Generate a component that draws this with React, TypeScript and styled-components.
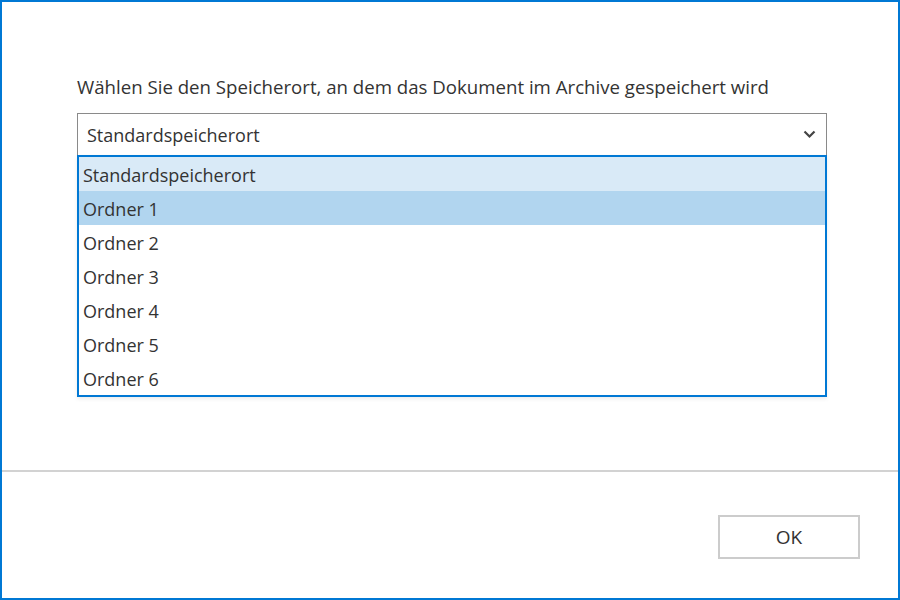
import styled, { createGlobalStyle } from 'styled-components';

const GlobalStyle = createGlobalStyle`
  html, body {
    margin: 0;
    padding: 0;
    background: #fff;
  }
  * {
    box-sizing: border-box;
  }
`;

const locations = [
  'Standardspeicherort',
  'Ordner 1',
  'Ordner 2',
  'Ordner 3',
  'Ordner 4',
  'Ordner 5',
  'Ordner 6',
];

const Chevron = () => (
  <svg width="13" height="9" viewBox="0 0 13 9" fill="none">
    <path d="M1.5 1.5 L6.5 6.5 L11.5 1.5" stroke="#444" strokeWidth="2.2" />
  </svg>
);

const App = () => {
  const selected = 'Standardspeicherort';
  const hovered = 'Ordner 1';

  return (
    <>
      <GlobalStyle />
      <Dialog>
        <Body>
          <Label>Wählen Sie den Speicherort, an dem das Dokument im Archive gespeichert wird</Label>
          <SelectWrap>
            <SelectBox>
              <span>{selected}</span>
              <Chevron />
            </SelectBox>
            <OptionList>
              {locations.map((loc) => (
                <Option
                  key={loc}
                  $selected={loc === selected}
                  $hovered={loc === hovered}
                >
                  {loc}
                </Option>
              ))}
            </OptionList>
          </SelectWrap>
        </Body>
        <Footer>
          <OkButton type="button">OK</OkButton>
        </Footer>
      </Dialog>
    </>
  );
};

export default App;

const Dialog = styled.div`
  width: 900px;
  height: 600px;
  border: 2px solid #0078d4;
  display: flex;
  flex-direction: column;
  font-family: 'Open Sans', 'Noto Sans', sans-serif;
  color: #333;
`;

const Body = styled.div`
  height: 470px;
  padding: 73px 71px 0 75px;
  border-bottom: 2px solid #d2d2d2;
`;

const Label = styled.div`
  font-size: 18.65px;
  line-height: 24px;
  margin-bottom: 14px;
`;

const SelectWrap = styled.div`
  position: relative;
  width: 750px;
`;

const SelectBox = styled.div`
  height: 43px;
  border: 1px solid #8a8a8a;
  display: flex;
  align-items: center;
  justify-content: space-between;
  padding: 0 10px 0 9px;
  font-size: 18px;
  background: #fff;
`;

const OptionList = styled.div`
  position: absolute;
  top: 42px;
  left: 0;
  right: 0;
  border: 2px solid #0078d4;
  background: #fff;
  box-shadow: 0 2px 4px rgba(0, 0, 0, 0.08);
`;

const Option = styled.div<{ $selected?: boolean; $hovered?: boolean }>`
  height: 34px;
  line-height: 36px;
  padding-left: 4px;
  font-size: 18px;
  background: ${(p) => (p.$hovered ? '#b1d5ef' : p.$selected ? '#d9eaf7' : '#fff')};
`;

const Footer = styled.div`
  flex: 1;
  display: flex;
  align-items: flex-start;
  justify-content: flex-end;
  padding: 43px 38px 0 0;
`;

const OkButton = styled.button`
  width: 142px;
  height: 44px;
  border: 2px solid #cccccc;
  background: #fff;
  font-family: 'Open Sans', 'Noto Sans', sans-serif;
  font-size: 19px;
  color: #333;
  cursor: pointer;
`;
